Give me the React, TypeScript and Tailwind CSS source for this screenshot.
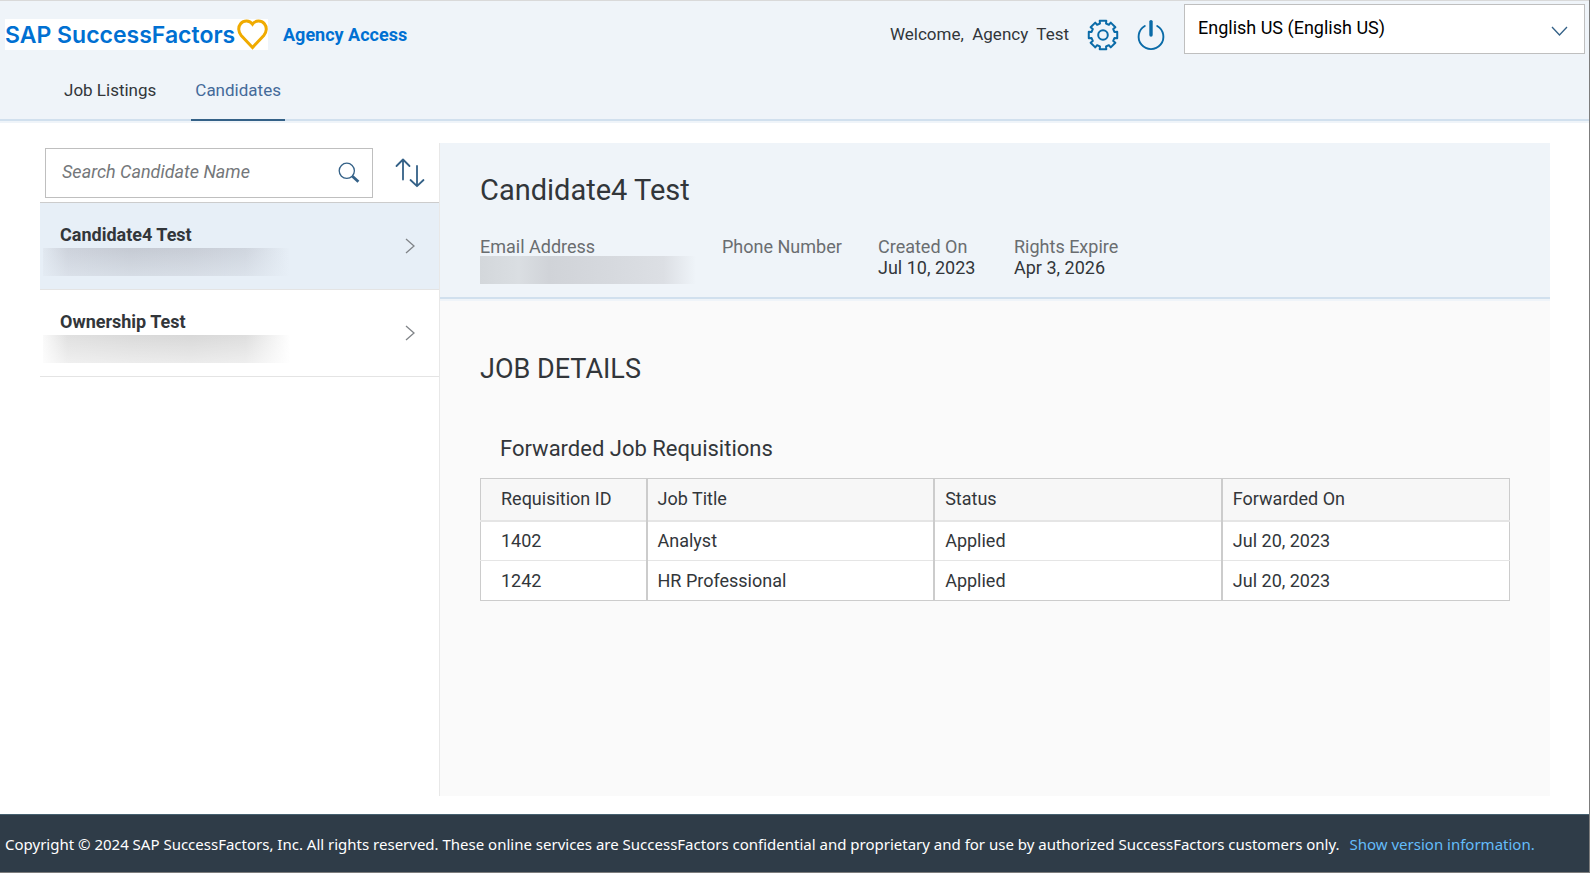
import type { ReactNode } from 'react'

const candidates = [
  { name: 'Candidate4 Test', selected: true },
  { name: 'Ownership Test', selected: false },
]

const requisitions = [
  { id: '1402', title: 'Analyst', status: 'Applied', forwardedOn: 'Jul 20, 2023' },
  { id: '1242', title: 'HR Professional', status: 'Applied', forwardedOn: 'Jul 20, 2023' },
]

// Outline of a cog with eight flat teeth, centred on 16,16
function gearPath() {
  const points: string[] = []
  for (let i = 0; i < 8; i++) {
    const mid = i * 45
    const corners = [
      [mid - 15, 11.8],
      [mid - 13, 14.6],
      [mid + 13, 14.6],
      [mid + 15, 11.8],
    ]
    for (const [deg, r] of corners) {
      const a = (deg * Math.PI) / 180
      points.push(`${(16 + r * Math.sin(a)).toFixed(2)} ${(16 - r * Math.cos(a)).toFixed(2)}`)
    }
  }
  return `M${points.join('L')}Z`
}

function GearIcon() {
  return (
    <svg className="h-8 w-8" viewBox="0 0 32 32" fill="none" stroke="#0a6ba8" strokeWidth="2" strokeLinejoin="round">
      <path d={gearPath()} />
      <circle cx="16" cy="16" r="4.8" />
    </svg>
  )
}

function PowerIcon() {
  return (
    <svg className="h-8 w-8" viewBox="0 0 32 32" fill="none" stroke="#0a6ba8" strokeLinecap="round">
      <path d="M9.8 7A12.4 12.4 0 1 0 22.2 7" strokeWidth="1.9" />
      <path d="M16 2.6V16" strokeWidth="3.4" />
    </svg>
  )
}

function HeartIcon() {
  return (
    <svg className="h-[31px] w-[31px]" viewBox="0 0 31 31" fill="none" stroke="#f0ab00" strokeWidth="3">
      <path d="M15.5 28.5L4.2 16.4C1.2 13 0.9 8 3.6 4.8C6.6 1.2 12.6 1 15.5 5.2C18.4 1 24.4 1.2 27.4 4.8C30.1 8 29.8 13 26.8 16.4Z" />
    </svg>
  )
}

function SearchIcon() {
  return (
    <svg className="h-[22px] w-[22px]" viewBox="0 0 22 22" fill="none" stroke="#346187">
      <circle cx="8.8" cy="8.8" r="7.6" strokeWidth="1.3" />
      <path d="M14.4 14.2L20.4 19.8" strokeWidth="2.8" />
    </svg>
  )
}

function SortIcon() {
  return (
    <svg className="h-[30px] w-[30px]" viewBox="0 0 30 30" fill="none" stroke="#346187" strokeWidth="1.8" strokeLinecap="round" strokeLinejoin="round">
      <path d="M8 21.5V2M1.5 8L8 1.5L14.5 8" />
      <path d="M22 8V27.5M15.5 22L22 28.2L28.5 22" />
    </svg>
  )
}

function Field({ label, className, children }: { label: string; className?: string; children?: ReactNode }) {
  return (
    <div className={className}>
      <dt className="whitespace-nowrap text-[#6a6d70]">{label}</dt>
      <dd className="h-[21px] whitespace-nowrap">{children}</dd>
    </div>
  )
}

function Header() {
  return (
    <header className="border-t border-[#d9d9d9] bg-[#eff4f9]">
      <div className="flex items-start justify-between pr-1 pl-[5px]">
        <div className="mt-[18px] flex items-center">
          <div className="flex h-[31px] items-center gap-1 bg-white font-['Inter','Liberation_Sans',sans-serif] text-[23px] font-semibold text-[#0070d2]">
            <span className="w-[228px] whitespace-nowrap">SAP SuccessFactors</span>
            <HeartIcon />
          </div>
          <span className="ml-[15px] text-[18px] font-bold text-[#0070d2]">Agency Access</span>
        </div>

        <div className="flex items-start">
          <p className="mt-[21px] mr-[18px] text-[17px] whitespace-pre">Welcome,  Agency  Test</p>
          <button type="button" aria-label="Settings" className="mt-[18px] mr-4">
            <GearIcon />
          </button>
          <button type="button" aria-label="Log out" className="mt-[18px] mr-[17px]">
            <PowerIcon />
          </button>
          <div className="relative mt-[3px]">
            <select
              aria-label="Language"
              className="h-[50px] w-[401px] appearance-none border border-[#bfbfbf] bg-white pr-12 pb-[3px] pl-[13px] text-black"
            >
              <option>English US (English US)</option>
            </select>
            <svg className="pointer-events-none absolute top-[22px] right-[17px] h-[10px] w-[17px]" viewBox="0 0 17 10" fill="none" stroke="#346187" strokeWidth="1.3">
              <path d="M1 1L8.5 9L16 1" />
            </svg>
          </div>
        </div>
      </div>

      <nav className="flex h-[67px] gap-[31px] border-b-2 border-[#d1e0ee] pl-[60px] text-[17px]">
        <a href="#jobs" className="px-1 pt-6">Job Listings</a>
        <a href="#candidates" className="-mb-0.5 border-b-2 border-[#346187] px-1 pt-6 text-[#446a99]">
          Candidates
        </a>
      </nav>
      <div className="h-0.5 bg-[#eff4f9]" />
    </header>
  )
}

function CandidateList() {
  return (
    <aside className="w-[399px] shrink-0">
      <div className="flex h-[60px] items-center border-b border-[#ccc] pl-[5px]">
        <div className="flex h-[50px] w-[328px] items-center border border-[#bfbfbf] bg-white pr-3">
          <input
            type="search"
            aria-label="Search Candidate Name"
            placeholder="Search Candidate Name"
            className="min-w-0 flex-1 px-4 pb-0.5 outline-none placeholder:text-[#74777a] placeholder:italic"
          />
          <button type="button" aria-label="Search">
            <SearchIcon />
          </button>
        </div>
        <button type="button" aria-label="Sort" className="ml-[22px]">
          <SortIcon />
        </button>
      </div>

      <ul>
        {candidates.map((c) => (
          <li key={c.name} className={`border-b border-[#e4e4e4] ${c.selected ? 'bg-[#e7eff7]' : 'bg-white'}`}>
            <a href="#candidate" className="flex h-[86px] items-start justify-between pr-6 pl-[3px]">
              <div className="pt-5">
                <p className="pl-[17px] font-bold">{c.name}</p>
                {/* masked e-mail */}
                <div
                  className={`mt-px h-7 w-[247px] ${
                    c.selected
                      ? 'bg-[linear-gradient(to_bottom,transparent,#e7eff780),linear-gradient(to_right,#e1e8f0,#cdd2db_10%,#c5cad3_35%,#c8cdd6_60%,#cfd5de_82%,#e7eff7)]'
                      : 'bg-[linear-gradient(to_bottom,transparent,#ffffff80),linear-gradient(to_right,#fafafa,#e0e0e0_10%,#dadada_35%,#d8d8d8_60%,#dedede_82%,#ffffff)]'
                  }`}
                />
              </div>
              <svg className="h-4 w-[10px] self-center" viewBox="0 0 10 16" fill="none" stroke="#808488" strokeWidth="1.3">
                <path d="M1 1L9 8L1 15" />
              </svg>
            </a>
          </li>
        ))}
      </ul>
    </aside>
  )
}

function CandidateDetails() {
  return (
    <section className="flex min-w-0 flex-1 flex-col border-l border-[#e8e8e8] bg-[#fafafa]">
      <div className="border-b-2 border-[#d1e0ee] bg-[#eff4f9] px-10 pt-[27px] pb-[19px]">
        <h1 className="text-[29px] leading-10">Candidate4 Test</h1>
        <dl className="mt-[26px] flex gap-10 leading-[21px]">
          <Field label="Email Address" className="w-[202px]">
            <div className="mt-[-1px] h-7 w-[216px] bg-[linear-gradient(to_right,#d3d7db,#dadee2_18%,#d0d3d8_32%,#d6d9de_60%,#dcdfe4_85%,#eff4f9)]" />
          </Field>
          <Field label="Phone Number" className="w-[116px]" />
          <Field label="Created On" className="w-[96px]">Jul 10, 2023</Field>
          <Field label="Rights Expire">Apr 3, 2026</Field>
        </dl>
      </div>
      <div className="h-0.5 bg-[#eff4f9]" />

      <div className="px-10 pt-12">
        <h2 className="text-[27px] leading-10">JOB DETAILS</h2>
        <h3 className="mt-[45px] ml-5 text-[22px] leading-[30px]">Forwarded Job Requisitions</h3>
        <table className="mt-[14px] w-full table-fixed border-collapse border border-[#ccc] bg-white text-left">
          <thead>
            <tr className="h-[42px] border-b-2 border-[#e5e5e5] bg-[#f7f7f7]">
              <th className="w-[166px] border-r-2 border-r-[#ccc] pl-5 font-normal">Requisition ID</th>
              <th className="border-r-2 border-r-[#ccc] pl-[10px] font-normal">Job Title</th>
              <th className="border-r-2 border-r-[#ccc] pl-[10px] font-normal">Status</th>
              <th className="pl-[10px] font-normal">Forwarded On</th>
            </tr>
          </thead>
          <tbody>
            {requisitions.map((r) => (
              <tr key={r.id} className="h-10 border-b border-[#e5e5e5] last:border-[#ccc]">
                <td className="border-r-2 border-r-[#ccc] pl-5">{r.id}</td>
                <td className="border-r-2 border-r-[#ccc] pl-[10px]">{r.title}</td>
                <td className="border-r-2 border-r-[#ccc] pl-[10px]">{r.status}</td>
                <td className="pl-[10px]">{r.forwardedOn}</td>
              </tr>
            ))}
          </tbody>
        </table>
      </div>
    </section>
  )
}

export default function App() {
  return (
    <div className="flex min-h-screen flex-col border-r border-b border-[#7d7d7d] bg-white font-['Roboto','Liberation_Sans',sans-serif] text-[18px] leading-6 text-[#32363a]">
      <Header />
      <main className="flex flex-1 pt-5 pr-[39px] pb-[18px] pl-10">
        <CandidateList />
        <CandidateDetails />
      </main>
      <footer className="flex h-[58px] items-center gap-[10px] border-t border-[#45606f] bg-[#2f3c48] pl-[5px] font-['Noto_Sans','Liberation_Sans',sans-serif] text-[15px] whitespace-nowrap text-white">
        <p>
          Copyright © 2024 SAP SuccessFactors, Inc. All rights reserved. These online services are SuccessFactors
          confidential and proprietary and for use by authorized SuccessFactors customers only.
        </p>
        <a href="#version" className="text-[#64bdfa]">Show version information.</a>
      </footer>
    </div>
  )
}
